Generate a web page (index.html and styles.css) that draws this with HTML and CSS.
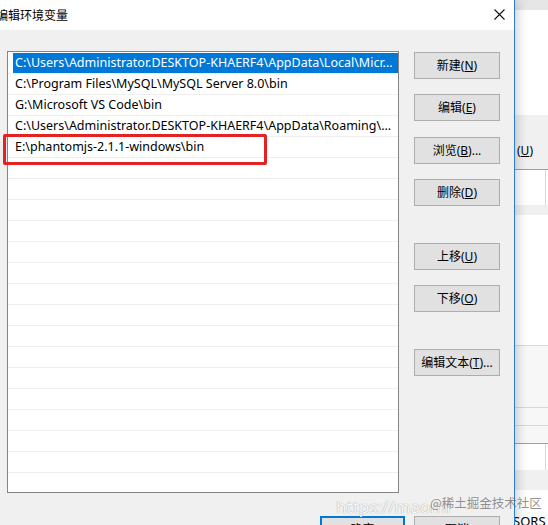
FILE: index.html
```html
<!DOCTYPE html>
<html lang="zh-CN">
<head>
<meta charset="utf-8">
<title>编辑环境变量</title>
<link rel="stylesheet" href="styles.css">
</head>
<body>
<div class="desk">
  <div class="dialog">
    <div class="titlebar">
      <span class="title">编辑环境变量</span>
      <svg class="close" width="11" height="11" viewBox="0 0 11 11"><path d="M0.5 0.5 L10.5 10.5 M10.5 0.5 L0.5 10.5" stroke="#111" stroke-width="1.1" fill="none"/></svg>
    </div>
    <div class="content">
      <div class="list">
        <div class="row"><div class="cell selected">C:\Users\Administrator.DESKTOP-KHAERF4\AppData\Local\Micr...</div></div>
        <div class="row"><div class="cell">C:\Program Files\MySQL\MySQL Server 8.0\bin</div></div>
        <div class="row"><div class="cell">G:\Microsoft VS Code\bin</div></div>
        <div class="row"><div class="cell">C:\Users\Administrator.DESKTOP-KHAERF4\AppData\Roaming\...</div></div>
        <div class="row"><div class="cell">E:\phantomjs-2.1.1-windows\bin</div></div>
        <div class="row"><div class="cell"></div></div>
        <div class="row"><div class="cell"></div></div>
        <div class="row"><div class="cell"></div></div>
        <div class="row"><div class="cell"></div></div>
        <div class="row"><div class="cell"></div></div>
        <div class="row"><div class="cell"></div></div>
        <div class="row"><div class="cell"></div></div>
        <div class="row"><div class="cell"></div></div>
        <div class="row"><div class="cell"></div></div>
        <div class="row"><div class="cell"></div></div>
        <div class="row"><div class="cell"></div></div>
        <div class="row"><div class="cell"></div></div>
        <div class="row"><div class="cell"></div></div>
        <div class="row"><div class="cell"></div></div>
        <div class="row"><div class="cell"></div></div>
        <div class="row"><div class="cell"></div></div>
      </div>
      <div class="buttons">
        <div class="btn">新建(<u>N</u>)</div>
        <div class="btn gap15">编辑(<u>E</u>)</div>
        <div class="btn">浏览(<u>B</u>)...</div>
        <div class="btn gap15">删除(<u>D</u>)</div>
        <div class="btn gapbig">上移(<u>U</u>)</div>
        <div class="btn gap15">下移(<u>O</u>)</div>
        <div class="btn gapbig">编辑文本(<u>T</u>)...</div>
      </div>
    </div>
    <div class="footer">
      <div class="btn ok">确定</div>
      <div class="btn cancel">取消</div>
    </div>
    <div class="highlight"></div>
    <div class="wm-url">https://maomi</div>
    <div class="wm-jj">@稀土掘金技术社区</div>
  </div>
  <div class="behind">
    <div class="b-top"></div>
    <div class="b-white h105"></div>
    <div class="b-gray b-u"><span><u>U</u></span></div>
    <div class="b-line-dark"></div>
    <div class="b-white h35 b-box"></div>
    <div class="b-gray h10"></div>
    <div class="b-white h130"></div>
    <div class="b-line-light"></div>
    <div class="b-pale h61"></div>
    <div class="b-line-light"></div>
    <div class="b-pale h17"></div>
    <div class="b-line-light"></div>
    <div class="b-pale h17"></div>
    <div class="b-line-dark"></div>
    <div class="b-white h26 b-box"></div>
    <div class="b-gray h20"></div>
    <div class="b-white b-sors"><span>SORS</span></div>
  </div>
</div>
</body>
</html>
```
FILE: styles.css
```css
* { box-sizing: border-box; }
html, body { margin: 0; padding: 0; }
body {
  width: 548px;
  height: 525px;
  overflow: hidden;
  font-family: "Noto Sans", "Noto Sans CJK SC", sans-serif;
  font-size: 12px;
  color: #000;
  background: #fff;
}
.desk {
  display: flex;
  width: 548px;
  height: 525px;
  overflow: hidden;
}
.dialog {
  position: relative;
  z-index: 1;
  flex: 0 0 515px;
  height: 525px;
  background: #f0f0f0;
  border-right: 1px solid #2b7dd0;
  box-shadow: 3px 0 10px rgba(0, 0, 0, 0.18);
}
.titlebar {
  height: 30px;
  background: #fff;
  display: flex;
  align-items: center;
  justify-content: space-between;
  padding-right: 9px;
}
.title {
  margin-left: -4px;
  font-size: 12px;
  line-height: 16px;
  font-family: "Noto Sans CJK SC", sans-serif;
}
.close { display: block; margin-top: -1px; }
.content {
  display: flex;
  align-items: flex-start;
  padding-top: 21px;
  padding-left: 7px;
}
.list {
  width: 392px;
  height: 442px;
  border: 1px solid #858585;
  background: #fff;
  padding-top: 1px;
  overflow: hidden;
}
.row {
  height: 21px;
  border-bottom: 1px solid #efefef;
}
.cell {
  margin-left: 5px;
  height: 20px;
  line-height: 20px;
  padding-left: 2px;
  font-size: 12.5px;
  white-space: nowrap;
  overflow: hidden;
}
.cell.selected {
  background: #0078d7;
  color: #fff;
}
.buttons {
  display: flex;
  flex-direction: column;
  margin-left: 15px;
  padding-top: 1px;
}
.btn {
  width: 86px;
  height: 27px;
  background: #e1e1e1;
  border: 1px solid #adadad;
  display: flex;
  align-items: center;
  justify-content: center;
  font-size: 12px;
  line-height: 16px;
  margin-top: 16px;
  white-space: nowrap;
}
.buttons .btn:first-child { margin-top: 0; }
.buttons .btn.gap15 { margin-top: 15px; }
.buttons .btn.gapbig { margin-top: 37px; }
.btn u { text-decoration-thickness: 1px; text-underline-offset: 1px; }
.footer {
  display: flex;
  justify-content: flex-end;
  gap: 9px;
  padding-right: 14px;
  margin-top: 23px;
}
.footer .btn { margin-top: 0; }
.btn.ok {
  width: 85px;
  border: 2px solid #0078d7;
}
.highlight {
  position: absolute;
  left: 3px;
  top: 134px;
  width: 264px;
  height: 31px;
  border: 3px solid #e42222;
  border-radius: 2px;
}
.wm-url {
  position: absolute;
  left: 336px;
  top: 497px;
  font-family: "Noto Sans", sans-serif;
  font-size: 17px;
  line-height: 20px;
  color: rgba(255, 255, 255, 0.95);
  text-shadow: 0 0 1px rgba(120, 120, 120, 0.9);
}
.wm-jj {
  position: absolute;
  left: 430px;
  top: 494px;
  font-family: "Noto Sans CJK SC", sans-serif;
  font-size: 12.5px;
  line-height: 18px;
  color: rgba(110, 110, 110, 0.75);
  white-space: nowrap;
}
.behind {
  flex: 1 1 auto;
  display: flex;
  flex-direction: column;
  background: #fff;
  overflow: hidden;
}
.behind > * { flex-shrink: 0; }
.b-top { height: 10px; background: #e6e6e6; }
.b-white { background: #fff; }
.b-gray { background: #f0f0f0; }
.b-pale { background: #f7f7f7; }
.h105 { height: 105px; }
.h35 { height: 35px; }
.h10 { height: 10px; }
.h130 { height: 130px; }
.h61 { height: 61px; }
.h17 { height: 17px; }
.h26 { height: 26px; }
.h20 { height: 20px; }
.b-u {
  height: 54px;
  padding: 28px 0 0 2px;
  font-size: 12px;
  line-height: 16px;
}
.b-u span::before { content: "("; }
.b-u span::after { content: ")"; }
.b-line-dark { height: 1px; background: #a0a0a0; }
.b-line-light { height: 1px; background: #d8d8d8; }
.b-box { border-right: 1px solid #d6d6d6; margin-right: 2px; }
.b-sors {
  padding-top: 23px;
  font-size: 13px;
  line-height: 16px;
  white-space: nowrap;
}
.b-sors span { margin-left: -2px; }
```
